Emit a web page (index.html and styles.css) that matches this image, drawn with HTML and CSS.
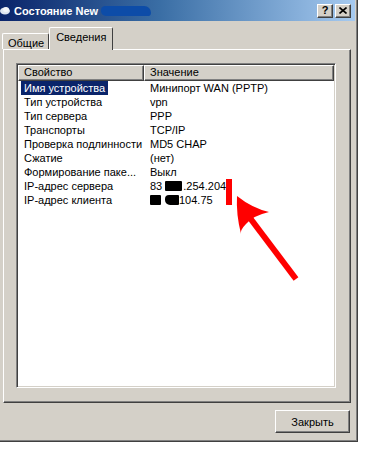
FILE: index.html
```html
<!DOCTYPE html>
<html>
  <head>
    <title>Состояние New</title>
    <link rel="stylesheet" href="styles.css">
  </head>
  <body>
    <div class="window">
      <div class="titlebar">
        <svg class="app-icon" width="11" height="9" viewBox="0 0 11 9">
          <ellipse cx="5" cy="5" rx="5" ry="3.5" fill="#dfe6f0" />
          <ellipse cx="6" cy="3.5" rx="3" ry="2.5" fill="#f4f6fa" />
        </svg>
        <span class="title">Состояние New</span>
        <span class="scribble"></span>
        <div class="caption-btns">
          <span class="cap-btn">?</span>
          <span class="cap-btn">
            <svg width="8" height="7" viewBox="0 0 8 7">
              <path d="M0.5 0.5 L7.5 6.5 M7.5 0.5 L0.5 6.5" stroke="#000" stroke-width="1.6" />
            </svg>
          </span>
        </div>
      </div>

      <div class="tabs">
        <div class="tab">Общие</div>
        <div class="tab active">Сведения</div>
      </div>

      <div class="panel">
        <div class="listbox">
          <div class="list-head">
            <div class="head-col head-prop">Свойство</div>
            <div class="head-col head-val">Значение</div>
          </div>
          <div class="row">
            <span class="cell-prop"><span class="sel">Имя устройства</span></span>
            <span class="cell-val">Минипорт WAN (PPTP)</span>
          </div>
          <div class="row">
            <span class="cell-prop"><span class="txt">Тип устройства</span></span>
            <span class="cell-val">vpn</span>
          </div>
          <div class="row">
            <span class="cell-prop"><span class="txt">Тип сервера</span></span>
            <span class="cell-val">PPP</span>
          </div>
          <div class="row">
            <span class="cell-prop"><span class="txt">Транспорты</span></span>
            <span class="cell-val">TCP/IP</span>
          </div>
          <div class="row">
            <span class="cell-prop"><span class="txt">Проверка подлинности</span></span>
            <span class="cell-val">MD5 CHAP</span>
          </div>
          <div class="row">
            <span class="cell-prop"><span class="txt">Сжатие</span></span>
            <span class="cell-val">(нет)</span>
          </div>
          <div class="row">
            <span class="cell-prop"><span class="txt">Формирование паке...</span></span>
            <span class="cell-val">Выкл</span>
          </div>
          <div class="row">
            <span class="cell-prop"><span class="txt">IP-адрес сервера</span></span>
            <span class="cell-val">83 <span class="blot blot-a"></span>.254.204</span>
          </div>
          <div class="row">
            <span class="cell-prop"><span class="txt">IP-адрес клиента</span></span>
            <span class="cell-val"><span class="blot blot-b"></span><span class="blot blot-c"></span>104.75</span>
          </div>
        </div>
      </div>

      <div class="footer">
        <button class="btn">Закрыть</button>
      </div>

      <!-- red marks drawn over the screenshot -->
      <div class="red-bar"></div>
      <svg class="arrow" width="358" height="300" viewBox="0 0 358 300">
        <line x1="296" y1="279" x2="250" y2="218" stroke="#f00" stroke-width="6" />
        <path d="M237 196 Q252 208 269 212 Q252 216 246 224 Q240 230 241 234 Q236 214 237 196 Z" fill="#f00" />
      </svg>
    </div>
  </body>
</html>
```

FILE: styles.css
```css
html,
body {
  margin: 0;
  padding: 0;
  background: #fff;
  font-family: "Liberation Sans", Arial, sans-serif;
  font-size: 11px;
  color: #000;
}

.window {
  position: relative;
  width: 358px;
  height: 442px;
  box-sizing: border-box;
  background: #d4d0c8;
  border-right: 1px solid #404040;
  border-bottom: 1px solid #404040;
  box-shadow: inset -1px -1px 0 #808080;
  display: flex;
  flex-direction: column;
}

.titlebar {
  height: 21px;
  flex: none;
  display: flex;
  align-items: center;
  background: linear-gradient(to right, #0a246a 0%, #3a6ea5 45%, #a6caf0 100%);
  margin-right: 2px;
}

.app-icon {
  margin-left: 0;
  margin-right: 3px;
}

.title {
  color: #fff;
  font-weight: bold;
  font-size: 11px;
}

.scribble {
  display: inline-block;
  width: 50px;
  height: 10px;
  margin-left: 3px;
  background: #0d4ca8;
  border-radius: 5px 8px 4px 6px;
}

.caption-btns {
  margin-left: auto;
  margin-right: 4px;
  display: flex;
  gap: 2px;
}

.cap-btn {
  width: 16px;
  height: 14px;
  box-sizing: border-box;
  background: #d4d0c8;
  border-top: 1px solid #fff;
  border-left: 1px solid #fff;
  border-right: 1px solid #404040;
  border-bottom: 1px solid #404040;
  box-shadow: inset -1px -1px 0 #808080;
  display: flex;
  align-items: center;
  justify-content: center;
  font-weight: bold;
  font-size: 11px;
  line-height: 1;
}

.tabs {
  height: 28px;
  flex: none;
  display: flex;
  align-items: flex-end;
  padding-left: 2px;
}

.tab {
  height: 16px;
  box-sizing: border-box;
  padding: 3px 4px 0 5px;
  border-top: 1px solid #fff;
  border-left: 1px solid #fff;
  border-right: 1px solid #404040;
  border-radius: 2px 2px 0 0;
  margin-bottom: 0;
}

.tab.active {
  height: 23px;
  margin-bottom: -1px;
  padding: 3px 6px 0 6px;
  background: #d4d0c8;
  position: relative;
  z-index: 1;
}

.panel {
  width: 348px;
  height: 354px;
  flex: none;
  box-sizing: border-box;
  margin-left: 3px;
  padding: 13px 0 0 12px;
  border-top: 1px solid #fff;
  border-left: 1px solid #fff;
  border-right: 1px solid #404040;
  border-bottom: 1px solid #404040;
  box-shadow: inset -1px -1px 0 #808080;
}

.listbox {
  width: 320px;
  height: 325px;
  box-sizing: border-box;
  background: #fff;
  border-top: 1px solid #808080;
  border-left: 1px solid #808080;
  border-right: 1px solid #fff;
  border-bottom: 1px solid #fff;
  box-shadow: inset 1px 1px 0 #404040, inset -1px -1px 0 #d4d0c8;
  padding: 1px;
}

.list-head {
  display: flex;
  height: 16px;
}

.head-col {
  box-sizing: border-box;
  height: 16px;
  line-height: 13px;
  padding-left: 5px;
  background: #d4d0c8;
  border-top: 1px solid #fff;
  border-left: 1px solid #fff;
  border-right: 1px solid #404040;
  border-bottom: 1px solid #404040;
  box-shadow: inset -1px -1px 0 #808080;
}

.head-prop {
  width: 126px;
}

.head-val {
  flex: 1;
}

.row {
  display: flex;
  height: 14px;
  line-height: 14px;
  white-space: nowrap;
}

.cell-prop {
  width: 126px;
  padding-left: 3px;
  box-sizing: border-box;
}

.cell-prop .sel,
.cell-prop .txt {
  padding: 0 3px 0 3px;
}

.sel {
  background: #0a246a;
  color: #fff;
  display: inline-block;
  height: 14px;
}

.cell-val {
  padding-left: 6px;
}

.blot {
  display: inline-block;
  height: 10px;
  background: #000;
  vertical-align: -1px;
  border-radius: 1px;
}

.blot-a {
  width: 17px;
  margin-right: 1px;
}

.blot-b {
  width: 11px;
  margin-right: 4px;
}

.blot-c {
  width: 14px;
  border-radius: 4px 1px 1px 5px;
}

.footer {
  display: flex;
  justify-content: flex-end;
  padding: 7px 7px 0 0;
}

.btn {
  width: 75px;
  height: 23px;
  box-sizing: border-box;
  font-family: "Liberation Sans", Arial, sans-serif;
  font-size: 11px;
  color: #000;
  background: #d4d0c8;
  border-top: 1px solid #fff;
  border-left: 1px solid #fff;
  border-right: 1px solid #404040;
  border-bottom: 1px solid #404040;
  box-shadow: inset -1px -1px 0 #808080;
  padding: 0;
}

.red-bar {
  position: absolute;
  left: 226px;
  top: 179px;
  width: 6px;
  height: 26px;
  background: #f00;
}

.arrow {
  position: absolute;
  left: 0;
  top: 0;
  pointer-events: none;
}
```
